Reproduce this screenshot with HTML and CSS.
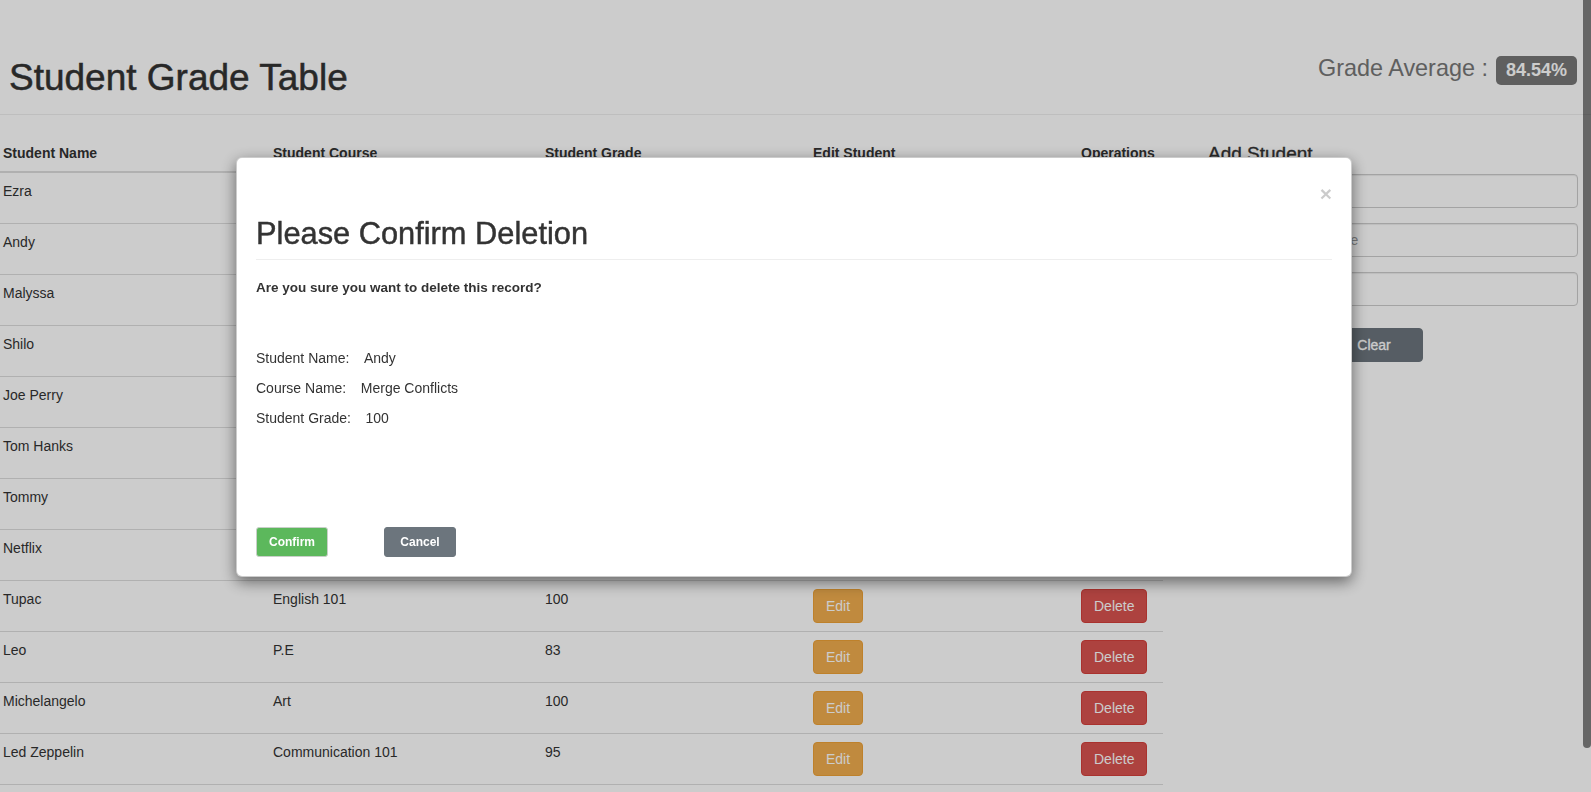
FILE: index.html
```html
<!DOCTYPE html>
<html lang="en">
<head>
<meta charset="utf-8">
<title>Student Grade Table</title>
<link rel="stylesheet" href="styles.css">
</head>
<body>
<header class="page-header">
  <h1 class="page-title">Student Grade Table</h1>
  <div class="grade-average">Grade Average :<span class="badge">84.54%</span></div>
</header>

<main class="content">
  <table class="grade-table">
    <colgroup>
      <col class="col-name">
      <col class="col-course">
      <col class="col-grade">
      <col class="col-edit">
      <col class="col-ops">
    </colgroup>
    <thead>
      <tr>
        <th>Student Name</th>
        <th>Student Course</th>
        <th>Student Grade</th>
        <th>Edit Student</th>
        <th>Operations</th>
      </tr>
    </thead>
    <tbody>
      <tr><td>Ezra</td><td>Math 101</td><td>90</td><td><button class="btn btn-warning">Edit</button></td><td><button class="btn btn-danger">Delete</button></td></tr>
      <tr><td>Andy</td><td>Merge Conflicts</td><td>100</td><td><button class="btn btn-warning">Edit</button></td><td><button class="btn btn-danger">Delete</button></td></tr>
      <tr><td>Malyssa</td><td>Science</td><td>88</td><td><button class="btn btn-warning">Edit</button></td><td><button class="btn btn-danger">Delete</button></td></tr>
      <tr><td>Shilo</td><td>History</td><td>75</td><td><button class="btn btn-warning">Edit</button></td><td><button class="btn btn-danger">Delete</button></td></tr>
      <tr><td>Joe Perry</td><td>Music</td><td>92</td><td><button class="btn btn-warning">Edit</button></td><td><button class="btn btn-danger">Delete</button></td></tr>
      <tr><td>Tom Hanks</td><td>Acting 101</td><td>85</td><td><button class="btn btn-warning">Edit</button></td><td><button class="btn btn-danger">Delete</button></td></tr>
      <tr><td>Tommy</td><td>Biology</td><td>70</td><td><button class="btn btn-warning">Edit</button></td><td><button class="btn btn-danger">Delete</button></td></tr>
      <tr><td>Netflix</td><td>Film Studies</td><td>60</td><td><button class="btn btn-warning">Edit</button></td><td><button class="btn btn-danger">Delete</button></td></tr>
      <tr><td>Tupac</td><td>English 101</td><td>100</td><td><button class="btn btn-warning">Edit</button></td><td><button class="btn btn-danger">Delete</button></td></tr>
      <tr><td>Leo</td><td>P.E</td><td>83</td><td><button class="btn btn-warning">Edit</button></td><td><button class="btn btn-danger">Delete</button></td></tr>
      <tr><td>Michelangelo</td><td>Art</td><td>100</td><td><button class="btn btn-warning">Edit</button></td><td><button class="btn btn-danger">Delete</button></td></tr>
      <tr><td>Led Zeppelin</td><td>Communication 101</td><td>95</td><td><button class="btn btn-warning">Edit</button></td><td><button class="btn btn-danger">Delete</button></td></tr>
    </tbody>
  </table>

  <aside class="add-panel">
    <h4 class="panel-title">Add Student</h4>
    <div class="input-group">
      <span class="addon"><svg width="14" height="14" viewBox="0 0 14 14"><circle cx="7" cy="4" r="3" fill="#555"/><path d="M1 13c0-3.5 2.7-5 6-5s6 1.5 6 5z" fill="#555"/></svg></span>
      <input class="form-input" type="text" placeholder="Student Name">
    </div>
    <div class="input-group">
      <span class="addon"><svg width="14" height="14" viewBox="0 0 14 14"><rect x="1" y="2" width="12" height="10" rx="1" fill="none" stroke="#555" stroke-width="1.5"/><path d="M3 5h8M3 7h8M3 9h6" stroke="#555" stroke-width="1"/></svg></span>
      <input class="form-input" type="text" placeholder="Student Course">
    </div>
    <div class="input-group">
      <span class="addon"><svg width="14" height="14" viewBox="0 0 14 14"><path d="M0 5l7-3 7 3-7 3z" fill="#555"/><path d="M3 7v3c0 1 2 2 4 2s4-1 4-2V7L7 9z" fill="#555"/></svg></span>
      <input class="form-input" type="text" placeholder="Student Grade">
    </div>
    <div class="panel-actions">
      <button class="btn btn-success btn-add">Add</button>
      <button class="btn btn-secondary btn-clear">Clear</button>
    </div>
  </aside>
</main>

<div class="backdrop"></div>

<div class="modal-layer">
  <div class="modal">
    <div class="close-row"><button class="close" type="button">&times;</button></div>
    <h2 class="modal-title">Please Confirm Deletion</h2>
    <hr class="modal-rule">
    <p class="confirm-question">Are you sure you want to delete this record?</p>
    <div class="details">
      <div class="detail-row">Student Name:<span class="detail-value">Andy</span></div>
      <div class="detail-row">Course Name:<span class="detail-value">Merge Conflicts</span></div>
      <div class="detail-row">Student Grade:<span class="detail-value">100</span></div>
    </div>
    <div class="modal-footer">
      <button class="btn-sm btn-confirm" type="button">Confirm</button>
      <button class="btn-sm btn-cancel" type="button">Cancel</button>
    </div>
  </div>
</div>

<div class="scroll-thumb"></div>
</body>
</html>
```

FILE: styles.css
```css
* {
  box-sizing: border-box;
}

html, body {
  margin: 0;
  padding: 0;
}

body {
  font-family: "Liberation Sans", Arial, Helvetica, sans-serif;
  font-size: 14px;
  line-height: 20px;
  color: #333;
  background: #fff;
  overflow: hidden;
  width: 1591px;
  height: 792px;
}

/* header */
.page-header {
  display: flex;
  justify-content: space-between;
  align-items: flex-start;
  height: 115px;
  padding: 53px 14px 0 9px;
  border-bottom: 1px solid #eee;
}

.page-title {
  margin: 5px 0 0;
  font-size: 37px;
  font-weight: 500;
  line-height: 39.6px;
  color: #333;
  -webkit-text-stroke: 0.5px #333;
}

.grade-average {
  font-size: 23.4px;
  line-height: 30px;
  color: #777;
  white-space: nowrap;
}

.badge {
  display: inline-block;
  margin-left: 8px;
  padding: 5.5px 10px;
  font-size: 18px;
  font-weight: bold;
  line-height: 18px;
  color: #fff;
  background: #777;
  border-radius: 5px;
}

/* content */
.content {
  display: flex;
  align-items: flex-start;
  padding-top: 20px;
}

.grade-table {
  width: 1163px;
  border-collapse: collapse;
  table-layout: fixed;
}

.col-name { width: 270px; }
.col-course { width: 272px; }
.col-grade { width: 268px; }
.col-edit { width: 268px; }
.col-ops { width: 85px; }

.grade-table th {
  text-align: left;
  font-weight: bold;
  padding: 8px 8px 8px 3px;
  line-height: 20px;
  vertical-align: bottom;
  border-bottom: 2px solid #ddd;
  white-space: nowrap;
}

.grade-table td {
  padding: 8px 8px 8px 3px;
  line-height: 20px;
  vertical-align: top;
  border-top: 1px solid #ddd;
  border-bottom: 1px solid #ddd;
  white-space: nowrap;
}

.btn {
  display: inline-block;
  padding: 6px 12px;
  font-family: inherit;
  font-size: 14px;
  line-height: 20px;
  color: #fff;
  border: 1px solid transparent;
  border-radius: 4px;
  cursor: pointer;
}

.btn-warning {
  background: #f0ad4e;
  border-color: #eea236;
}

.btn-danger {
  background: #d9534f;
  border-color: #d43f3a;
}

.btn-success {
  background: #5cb85c;
  border-color: #4cae4c;
}

.btn-secondary {
  background: #6c757d;
  border-color: #6c757d;
  -webkit-text-stroke: 0.3px #fff;
}

/* add panel */
.add-panel {
  display: flex;
  flex-direction: column;
  margin-left: 45px;
  width: 370px;
}

.panel-title {
  margin: 8px 0 10px;
  font-size: 19px;
  font-weight: 500;
  line-height: 21px;
  color: #333;
  -webkit-text-stroke: 0.35px #333;
}

.input-group {
  display: flex;
  height: 34px;
  margin-bottom: 15px;
}

.addon {
  display: flex;
  align-items: center;
  justify-content: center;
  width: 40px;
  background: #eee;
  border: 1px solid #ccc;
  border-right: 0;
  border-radius: 4px 0 0 4px;
}

.form-input {
  flex: 1;
  min-width: 0;
  height: 34px;
  padding: 6px 12px;
  font-family: inherit;
  font-size: 14px;
  color: #555;
  background: #fff;
  border: 1px solid #ccc;
  border-radius: 0 4px 4px 0;
  box-shadow: inset 0 1px 1px rgba(0, 0, 0, 0.075);
}

.form-input::placeholder {
  color: #999;
}

.panel-actions {
  display: flex;
  gap: 12px;
  margin-top: 7px;
}

.btn-add {
  width: 105px;
}

.btn-clear {
  width: 98px;
}

/* backdrop + modal */
.backdrop {
  position: fixed;
  inset: 0;
  background: rgba(0, 0, 0, 0.2);
}

.modal-layer {
  position: fixed;
  inset: 0;
  display: flex;
  justify-content: center;
  align-items: flex-start;
  padding: 157px 3px 0 0;
}

.modal {
  width: 1116px;
  padding: 19px;
  background: #fff;
  border: 1px solid rgba(0, 0, 0, 0.2);
  border-radius: 6px;
  box-shadow: 0 5px 15px rgba(0, 0, 0, 0.5);
}

.close-row {
  display: flex;
  justify-content: flex-end;
  height: 21px;
  margin-top: 6px;
}

.close {
  padding: 0;
  font-family: inherit;
  font-size: 21px;
  font-weight: bold;
  line-height: 21px;
  color: #000;
  opacity: 0.2;
  background: none;
  border: 0;
}

.modal-title {
  margin: 13px 0 0;
  font-size: 30.8px;
  font-weight: 500;
  line-height: 33px;
  color: #333;
  -webkit-text-stroke: 0.45px #333;
}

.modal-rule {
  margin: 9px 0 0;
  border: 0;
  border-top: 1px solid #eee;
  height: 0;
}

.confirm-question {
  margin: 18px 0 0;
  font-size: 13.5px;
  font-weight: bold;
  line-height: 20px;
}

.details {
  display: flex;
  flex-direction: column;
  gap: 10px;
  margin-top: 50px;
}

.detail-row {
  line-height: 20px;
}

.detail-value {
  margin-left: 14.5px;
}

.modal-footer {
  display: flex;
  gap: 56px;
  margin-top: 99px;
}

.btn-sm {
  width: 72px;
  height: 30px;
  padding: 0;
  font-family: inherit;
  font-size: 12px;
  font-weight: bold;
  line-height: 28px;
  color: #fff;
  border: 1px solid transparent;
  border-radius: 3px;
}

.btn-confirm {
  background: #5cb85c;
  border-color: #c9cfc9;
}

.btn-cancel {
  background: #6c757d;
  border-color: #6c757d;
}

/* overlay scrollbar */
.scroll-thumb {
  position: fixed;
  top: -6px;
  right: 0;
  width: 8px;
  height: 754px;
  border-radius: 4px;
  background: rgba(0, 0, 0, 0.5);
}
```
